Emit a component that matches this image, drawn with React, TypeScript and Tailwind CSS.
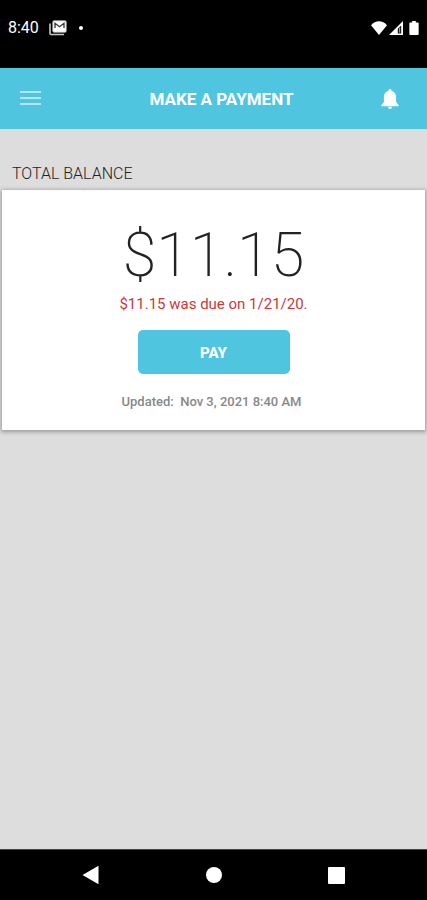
import React from "react";

interface IIcon {
  className?: string;
}

function GmailStackIcon({ className }: IIcon) {
  return (
    <svg className={className} viewBox="0 0 18 16" fill="none">
      <path d="M1 3.500v10a1 1 0 0 0 1 1h13" stroke="#c8c8c8" strokeWidth="1.600" />
      <rect x="3.800" y=".8" width="13.400" height="11.400" rx="1.200" fill="#fff" stroke="#bbb" strokeWidth=".8" />
      <path d="M6 8V3.300l4.500 3.400L15 3.300V8" stroke="#333" strokeWidth="1.300" />
    </svg>
  );
}

function WifiIcon({ className }: IIcon) {
  return (
    <svg className={className} viewBox="0 0 16 14" fill="#fff">
      <path d="M8 14L0 4.200C2.100 1.700 5 .3 8 .3s5.900 1.400 8 3.900z" />
    </svg>
  );
}

function SignalIcon({ className }: IIcon) {
  return (
    <svg className={className} viewBox="0 0 14 14">
      <path d="M0 14L14 0v14z" fill="#fff" />
      <path d="M8.800 7.800l3.400-3.400v8.100H8.800z" fill="#111" />
      <path d="M10.100 7h1v4.800h-1z" fill="#aaa" />
    </svg>
  );
}

function BatteryIcon({ className }: IIcon) {
  return (
    <svg className={className} viewBox="0 0 10 15" fill="#fff">
      <path d="M3 0h4v1.500h2a1 1 0 0 1 1 1V14a1 1 0 0 1-1 1H1a1 1 0 0 1-1-1V2.500a1 1 0 0 1 1-1h2z" />
    </svg>
  );
}

function BellIcon({ className }: IIcon) {
  return (
    <svg className={className} viewBox="0 0 18 20" fill="#fff">
      <path d="M9 0c-.9 0-1.500.6-1.500 1.400v.3C4.600 2.500 2.900 4.900 2.900 7.800v5.200L.4 16v1.200h17.200V16l-2.500-3V7.800c0-2.900-1.700-5.300-4.600-6.100v-.3C10.500.6 9.900 0 9 0z" />
      <path d="M6.900 17.800h4.200c0 1.300-.9 2.100-2.100 2.100s-2.100-.8-2.100-2.100z" />
    </svg>
  );
}

function StatusBar() {
  return (
    <div className="flex h-17 items-start justify-between bg-black px-2 pt-5 text-white">
      <div className="flex h-4 items-center">
        <span className="text-base leading-4">8:40</span>
        <GmailStackIcon className="ml-2.5 h-4 w-4.5" />
        <span className="ml-3 size-1 rounded-full bg-white" />
      </div>
      <div className="flex h-4 items-center">
        <WifiIcon className="h-3.5 w-4" />
        <SignalIcon className="ml-0.5 size-3.5" />
        <BatteryIcon className="ml-1.5 h-3.5 w-2.5" />
      </div>
    </div>
  );
}

function Header() {
  return (
    <header className="grid h-[61px] grid-cols-[1fr_auto_1fr] items-center bg-[#50c5df] px-5">
      <button
        type="button"
        aria-label="Open menu"
        className="flex w-[21px] flex-col gap-1 justify-self-start pb-0.5"
      >
        <span className="h-0.5 w-full bg-[#b5e7f2]" />
        <span className="h-0.5 w-full bg-[#b5e7f2]" />
        <span className="h-0.5 w-full bg-[#b5e7f2]" />
      </button>
      <h1 className="pt-0.5 pl-4 text-[17px] font-bold text-white">MAKE A PAYMENT</h1>
      <button
        type="button"
        aria-label="Notifications"
        className="mr-2 justify-self-end"
      >
        <BellIcon className="h-5 w-4.5" />
      </button>
    </header>
  );
}

function BalanceCard() {
  return (
    <section className="mx-0.5 flex flex-col items-center bg-white pt-8 pb-5 shadow-[0_1px_4px_1px_#999999]">
      <p className="text-[61px] leading-[66px] font-extralight text-[#222222]">
        $11.15
      </p>
      <p className="mt-1.5 text-[15px] leading-5 text-[#c8393c]">
        $11.15 was due on 1/21/20.
      </p>
      <button
        type="button"
        className="mt-4 h-11 w-38 rounded-[5px] bg-[#50c5df] pt-0.5 text-[15px] font-extrabold text-white"
      >
        PAY
      </button>
      <p className="mt-5 pr-1 text-[13px] leading-4 font-medium whitespace-pre text-[#888888]">
        Updated:  Nov 3, 2021 8:40 AM
      </p>
    </section>
  );
}

function NavBar() {
  return (
    <nav className="grid h-[51px] grid-cols-[1fr_auto_1fr] items-center gap-26.5 border-t border-[#444444] bg-black">
      <button type="button" aria-label="Back" className="justify-self-end">
        <svg className="h-5 w-[18px]" viewBox="0 0 18 20" fill="#fff">
          <path d="M.5 10L16.500 .8v18.400z" />
        </svg>
      </button>
      <button
        type="button"
        aria-label="Home"
        className="size-4 rounded-full bg-white"
      />
      <button
        type="button"
        aria-label="Recent apps"
        className="size-[17px] rounded-[1px] bg-white"
      />
    </nav>
  );
}

function App() {
  return (
    <div className="flex min-h-screen flex-col bg-[#dddddd] font-[Roboto,sans-serif]">
      <StatusBar />
      <Header />
      <main className="flex-1 pt-8">
        <h2 className="px-3 pt-px pb-1 text-base font-light text-[#222222]">TOTAL BALANCE</h2>
        <BalanceCard />
      </main>
      <NavBar />
    </div>
  );
}

export default App;
